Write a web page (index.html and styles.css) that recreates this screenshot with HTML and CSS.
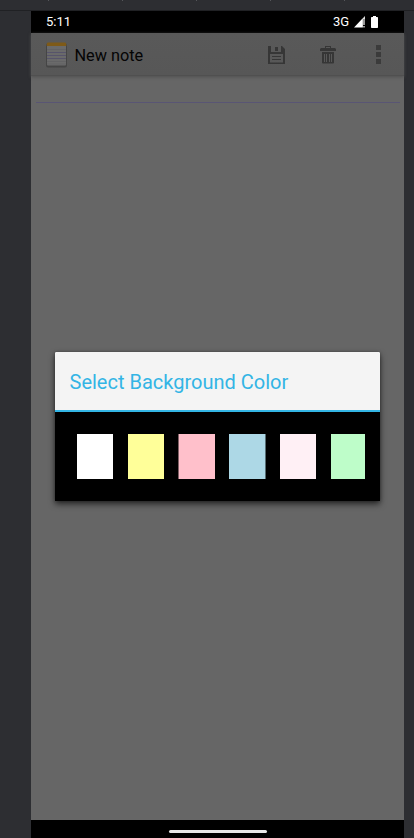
FILE: index.html
```html
<!DOCTYPE html>
<html lang="en">
<head>
<meta charset="utf-8">
<title>New note</title>
<link rel="stylesheet" href="styles.css">
</head>
<body>
<div class="toolbar-edge"><i></i><i></i><i></i><i></i><i></i></div>
<main class="phone">
  <header class="status">
    <span class="time">5:11</span>
    <span class="network">3G</span>
    <svg class="signal" width="12" height="12" viewBox="0 0 12 12"><path d="M0 11.5 8 3v8.500Z" fill="#fff"/><path d="M8 3 11 0v3H9v8.500H8Z" fill="#ddd"/><path d="M9 3h2v6H9zM9 10h2v1.500H9z" fill="#999"/></svg>
    <svg class="battery" width="7" height="12" viewBox="0 0 7 12"><path d="M2 0h3v1h1.300q.7 0 .7.700v9.600q0 .7-.7.700H.7q-.7 0-.7-.7V1.700Q0 1 .7 1H2Z" fill="#fff"/></svg>
  </header>
  <nav class="appbar">
    <svg class="note-icon" width="22" height="26" viewBox="0 0 22 26">
      <rect x="0" y="1.500" width="21" height="24" rx="2" fill="#454545"/>
      <rect x="1" y="1" width="19" height="22.500" rx="1" fill="#6a6a6a"/>
      <path d="M.7 4V2q0-1.500 1.500-1.500h16.600q1.500 0 1.500 1.500v2Z" fill="#7e5a18"/>
      <path d="M1 7.500h19M1 19.500h19M1 22h19" stroke="#626264"/>
      <path d="M1 10.500h19M1 13.500h19M1 16.500h19" stroke="#57546b"/>
    </svg>
    <h1>New note</h1>
    <svg class="save" width="17" height="18" viewBox="0 0 17 18">
      <path fill="#363636" fill-rule="evenodd" d="M0 0h3v6h10V0h1l3 3v15H0ZM2 8v8.500h13V8Z"/>
      <path fill="#363636" d="M7 1h3v4H7zM4 10h9v1H4zM4 13h9v1H4z"/>
    </svg>
    <svg class="trash" width="16" height="18" viewBox="0 0 16 18">
      <path fill="#363636" fill-rule="evenodd" d="M5 0h6v2h4l1 1v2H0V3l1-1h4ZM6 1v1h4V1Z"/>
      <path fill="#363636" fill-rule="evenodd" d="M2 6h12v10.500q0 1-1 1H3q-1 0-1-1ZM4 8v8h1V8ZM6 8v8h1V8ZM9 8v8h1V8ZM11 8v8h1V8Z"/>
    </svg>
    <svg class="more" width="5" height="19" viewBox="0 0 5 19"><path fill="#3b3b3b" d="M0 0h5v5H0zM0 7h5v5H0zM0 14h5v5H0z"/></svg>
  </nav>
  <section class="note">
    <div class="rule"></div>
    <div class="dialog">
      <h2>Select Background Color</h2>
      <div class="swatches">
        <span class="white"></span><span class="yellow"></span><span class="pink"></span><span class="blue"></span><span class="blush"></span><span class="green"></span>
      </div>
    </div>
  </section>
  <footer class="navigation"><div class="handle"></div></footer>
</main>
</body>
</html>
```
FILE: styles.css
```css
* { box-sizing: border-box; }
body { margin: 0; width: 414px; height: 838px; overflow: hidden; background: #2d2e32; font-family: Roboto, sans-serif; }
svg { display: block; flex: none; }
h1, h2 { margin: 0; font-weight: 400; white-space: nowrap; }
.toolbar-edge { height: 11px; border-bottom: 1px solid #202124; display: flex; gap: 73px; padding-left: 48px; }
.toolbar-edge i { width: 1px; height: 1px; background: #55565a; }
.phone { width: 373px; height: 827px; margin-left: 31px; display: flex; flex-direction: column; background: #666; }
.status { height: 22px; flex: none; background: #000; color: #fff; display: flex; align-items: center; padding-left: 15px; font-size: 13px; line-height: 22px; }
.time { width: 287px; }
.network { width: 20px; font-size: 13px; }
.signal { margin-left: 1px; }
.battery { margin-left: 5px; }
.appbar { height: 43px; flex: none; display: flex; align-items: center; padding-left: 15px; background: linear-gradient(#595959, #575757); border-bottom: 1px solid #505050; box-shadow: 0 1px 3px #505050; position: relative; }
.note-icon { margin-top: 1px; }
.appbar h1 { width: 193px; margin-left: 6.500px; font-size: 16.300px; line-height: 22px; color: #050505; margin-top: 3px; }
.save { margin-top: 1px; margin-left: .5px; }
.trash { margin-left: 35px; margin-top: 1px; }
.more { margin-left: 40px; margin-top: 1px; }
.note { flex: 1; min-height: 0; padding: 26px 4px 0 5px; }
.rule { height: 1px; background: #595574; }
.dialog { width: 325px; height: 149px; margin: 249px 0 0 19px; background: #000; border-radius: 1px 1px 0 0; box-shadow: 0 3px 6px rgba(0,0,0,.65), 0 0 3px rgba(0,0,0,.25); }
.dialog h2 { height: 60px; padding-left: 14.500px; border-bottom: 2px solid #33b5e5; border-radius: 1px 1px 0 0; background: #f4f4f4; color: #33b5e5; font-size: 20px; line-height: 61px; }
.swatches { display: grid; grid-template-columns: 51px 50px 51px 51px 51px 34px; padding: 22px 0 0 22px; }
.swatches span { width: 36px; height: 45px; }
.swatches .white { background: #fff; }
.swatches .yellow { background: #ff9; }
.swatches .pink { width: 37px; background: linear-gradient(90deg, #806066 1px, #ffc0cb 1px); }
.swatches .blue { width: 37px; background: linear-gradient(270deg, #566c73 1px, #add8e6 1px); }
.swatches .blush { background: #fff0f5; }
.swatches .green { width: 34px; background: #befdc9; }
.navigation { height: 18px; flex: none; background: #000; padding: 10px 0 0 137.500px; }
.handle { width: 98px; height: 3px; border-radius: 1.500px; background: #e8e8e8; }
```
